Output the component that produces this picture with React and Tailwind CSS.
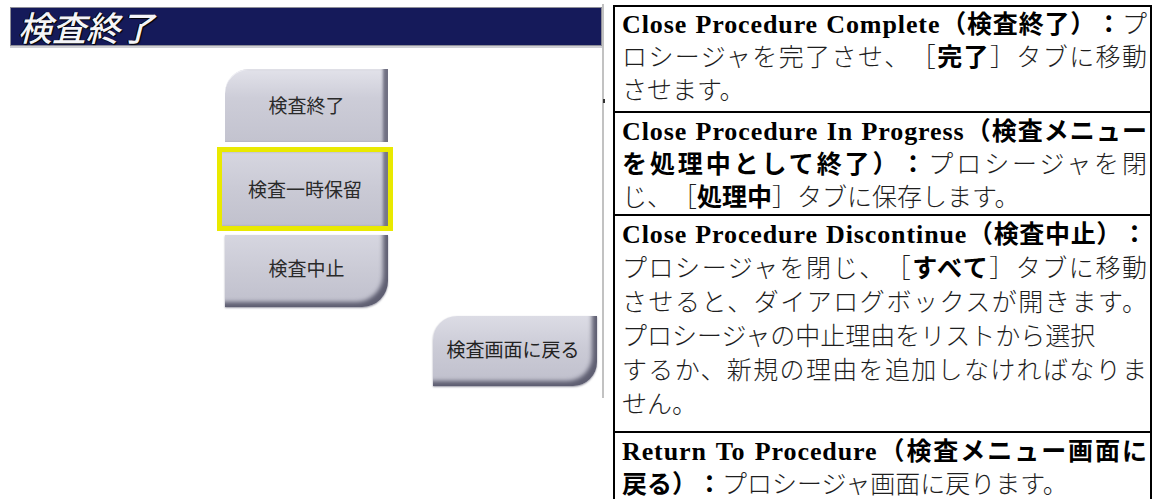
import React from "react";

const jp = { fontFamily: '"Liberation Serif", "Noto Sans CJK JP", serif' };
const sans = { fontFamily: '"Noto Sans CJK JP", "Noto Sans", sans-serif' };

function Line({ children, just = true }) {
  return (
    <div className={"whitespace-nowrap " + (just ? "text-justify [text-align-last:justify]" : "")}>
      {children}
    </div>
  );
}

const B = ({ children }) => <span className="font-bold text-black">{children}</span>;
const L = ({ children }) => <span className="text-[26px] font-bold tracking-[0.9px] text-black">{children}</span>;

export default function App() {
  return (
    <div className="flex h-[499px] w-[1154px] overflow-hidden bg-white">
      {/* Left: screenshot of the UI */}
      <div className="flex w-[602px] flex-none flex-col" style={sans}>
        <div className="ml-[10px] mt-[7px] flex h-[39px] w-[592px] items-center border border-[#8e8e98] bg-[#151a5a] pl-[7px] shadow-[0_2px_0_#cfcfd4]">
          <span className="text-[34px] font-medium italic leading-none text-[#f4f4f8] [text-shadow:1px_1px_1px_#000,-1px_0_0_#000]">検査終了</span>
        </div>

        <div className="ml-[217px] mt-[23px] flex w-[176px] flex-col">
          <div className="ml-[8px] flex h-[73px] w-[163px] items-center justify-center rounded-tl-[24px] bg-[linear-gradient(180deg,#e2e2ea_0%,#cdcdd8_40%,#c3c3cf_100%)] text-[19px] text-[#2a2a2a] shadow-[inset_-6px_0_3px_-1px_#707082,inset_0_1px_0_#f2f2f6]">
            検査終了
          </div>
          <div className="mt-[5px] h-[84px] border-[5px] border-[#e9e900] bg-[#c6c6d1]">
            <div className="flex h-full w-full items-center justify-center bg-[linear-gradient(180deg,#d6d6e0_0%,#cacad5_50%,#c1c1cd_100%)] text-[19px] text-[#2a2a2a] shadow-[inset_-6px_0_3px_-1px_#767688]">
              検査一時保留
            </div>
          </div>
          <div className="ml-[8px] mt-[4px] flex h-[72px] w-[163px] items-center justify-center rounded-br-[26px] bg-[linear-gradient(180deg,#d6d6e0_0%,#cacad5_50%,#bfbfcc_100%)] pb-[6px] text-[19px] text-[#2a2a2a] shadow-[inset_-6px_-6px_4px_-1px_#5f5f72,0_1px_2px_#9a9aa6]">
            検査中止
          </div>
        </div>

        <div className="ml-[433px] mt-[9px] flex h-[70px] w-[164px] items-center justify-center rounded-br-[24px] rounded-tl-[24px] bg-[linear-gradient(180deg,#dcdce5_0%,#cbcbd6_45%,#bfbfcc_100%)] pb-[4px] pr-[4px] text-[19px] text-[#222] shadow-[inset_-6px_-6px_4px_-1px_#5f5f72,0_1px_2px_#9a9aa6]">
          検査画面に戻る
        </div>
      </div>

      {/* vertical divider of the screenshot */}
      <div className="relative mt-[4px] h-[394px] w-[2px] flex-none bg-[#c2c2c2]">
        <div className="absolute left-[1px] top-[95px] h-[4px] w-[2px] bg-[#333]" />
      </div>

      {/* Right: description table */}
      <div
        className="ml-[9px] mt-[5px] w-[539px] flex-none border-x-2 border-t-2 border-black text-[25px] font-light text-[#1e1e1e] [text-spacing-trim:space-all]"
        style={jp}
      >
        <div className="h-[106px] border-b-2 border-black pl-[7px] pr-[3px] pt-[1px] leading-[33px]">
          <Line><L>Close Procedure Complete</L><B>（検査終了）：</B>プ</Line>
          <Line>ロシージャを完了させ、［<B>完了</B>］タブに移動</Line>
          <Line just={false}>させます。</Line>
        </div>
        <div className="h-[103px] border-b-2 border-black pl-[7px] pr-[3px] pt-[2px] leading-[33px]">
          <Line><L>Close Procedure In Progress</L><B>（検査メニュー</B></Line>
          <Line><B>を処理中として終了）：</B>プロシージャを閉</Line>
          <Line just={false}>じ、［<B>処理中</B>］タブに保存します。</Line>
        </div>
        <div className="h-[217px] border-b-2 border-black pl-[7px] pr-[3px] pt-[2px] leading-[34px]">
          <Line><L>Close Procedure Discontinue</L><B>（検査中止）：</B></Line>
          <Line>プロシージャを閉じ、［<B>すべて</B>］タブに移動</Line>
          <Line>させると、ダイアログボックスが開きます。</Line>
          <Line just={false}>プロシージャの中止理由をリストから選択</Line>
          <Line>するか、新規の理由を追加しなければなりま</Line>
          <Line just={false}>せん。</Line>
        </div>
        <div className="pl-[7px] pr-[3px] pt-[2px] leading-[33px]">
          <Line><L>Return To Procedure</L><B>（検査メニュー画面に</B></Line>
          <Line just={false}><B>戻る）：</B>プロシージャ画面に戻ります。</Line>
        </div>
      </div>
    </div>
  );
}
